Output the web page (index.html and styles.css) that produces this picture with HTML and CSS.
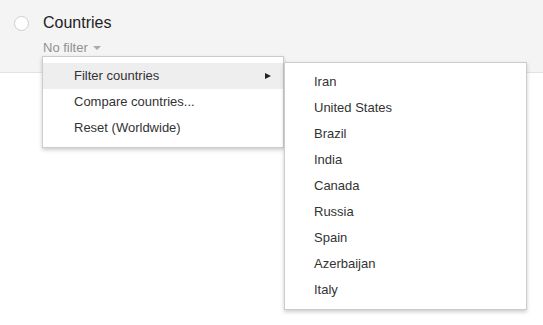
FILE: index.html
```html
<!DOCTYPE html>
<html lang="en">
<head>
  <meta charset="utf-8" />
  <title>Countries</title>
  <link rel="stylesheet" href="styles.css">
</head>
<body>
  <div class="header">
    <span class="radio"></span>
    <div class="title-block">
      <div class="title">Countries</div>
      <div class="filter">No filter <span class="caret"></span></div>
    </div>
  </div>

  <div class="menu main-menu">
    <div class="item active">Filter countries <span class="sub-arrow"></span></div>
    <div class="item">Compare countries...</div>
    <div class="item">Reset (Worldwide)</div>
  </div>

  <div class="menu sub-menu">
    <div class="item">Iran</div>
    <div class="item">United States</div>
    <div class="item">Brazil</div>
    <div class="item">India</div>
    <div class="item">Canada</div>
    <div class="item">Russia</div>
    <div class="item">Spain</div>
    <div class="item">Azerbaijan</div>
    <div class="item">Italy</div>
  </div>
</body>
</html>
```

FILE: styles.css
```css
* {
  box-sizing: border-box;
  margin: 0;
  padding: 0;
}
body {
  background: #fff;
  font-family: Arial, 'Liberation Sans', sans-serif;
  position: relative;
  height: 325px;
  overflow: hidden;
}
.header {
  display: flex;
  height: 73px;
  background: #f4f4f4;
  border-bottom: 1px solid #e2e2e2;
}
.radio {
  width: 15px;
  height: 15px;
  margin: 16px 0 0 14px;
  border: 1px solid #cfcfcf;
  border-radius: 50%;
  background: #fff;
}
.title-block {
  margin-left: 14px;
  padding-top: 14px;
}
.title {
  font-size: 16px;
  line-height: 18px;
  color: #222;
}
.filter {
  margin-top: 8px;
  font-size: 13px;
  line-height: 15px;
  color: #919191;
}
.caret {
  display: inline-block;
  width: 0;
  height: 0;
  margin-left: 2px;
  vertical-align: 2px;
  border-left: 4px solid transparent;
  border-right: 4px solid transparent;
  border-top: 4px solid #aaa;
}
.menu {
  position: absolute;
  background: #fff;
  border: 1px solid #ccc;
  box-shadow: 0 2px 4px rgba(0, 0, 0, 0.2);
  padding: 6px 0;
}
.main-menu {
  left: 42px;
  top: 56px;
  width: 242px;
}
.sub-menu {
  left: 284px;
  top: 62px;
  width: 243px;
}
.item {
  position: relative;
  height: 26px;
  line-height: 26px;
  padding-left: 31px;
  font-size: 13px;
  color: #333;
}
.sub-menu .item {
  padding-left: 29px;
}
.item.active {
  background: #eee;
}
.sub-arrow {
  position: absolute;
  right: 12px;
  top: 10px;
  width: 0;
  height: 0;
  border-top: 3px solid transparent;
  border-bottom: 3px solid transparent;
  border-left: 6px solid #222;
}
```
